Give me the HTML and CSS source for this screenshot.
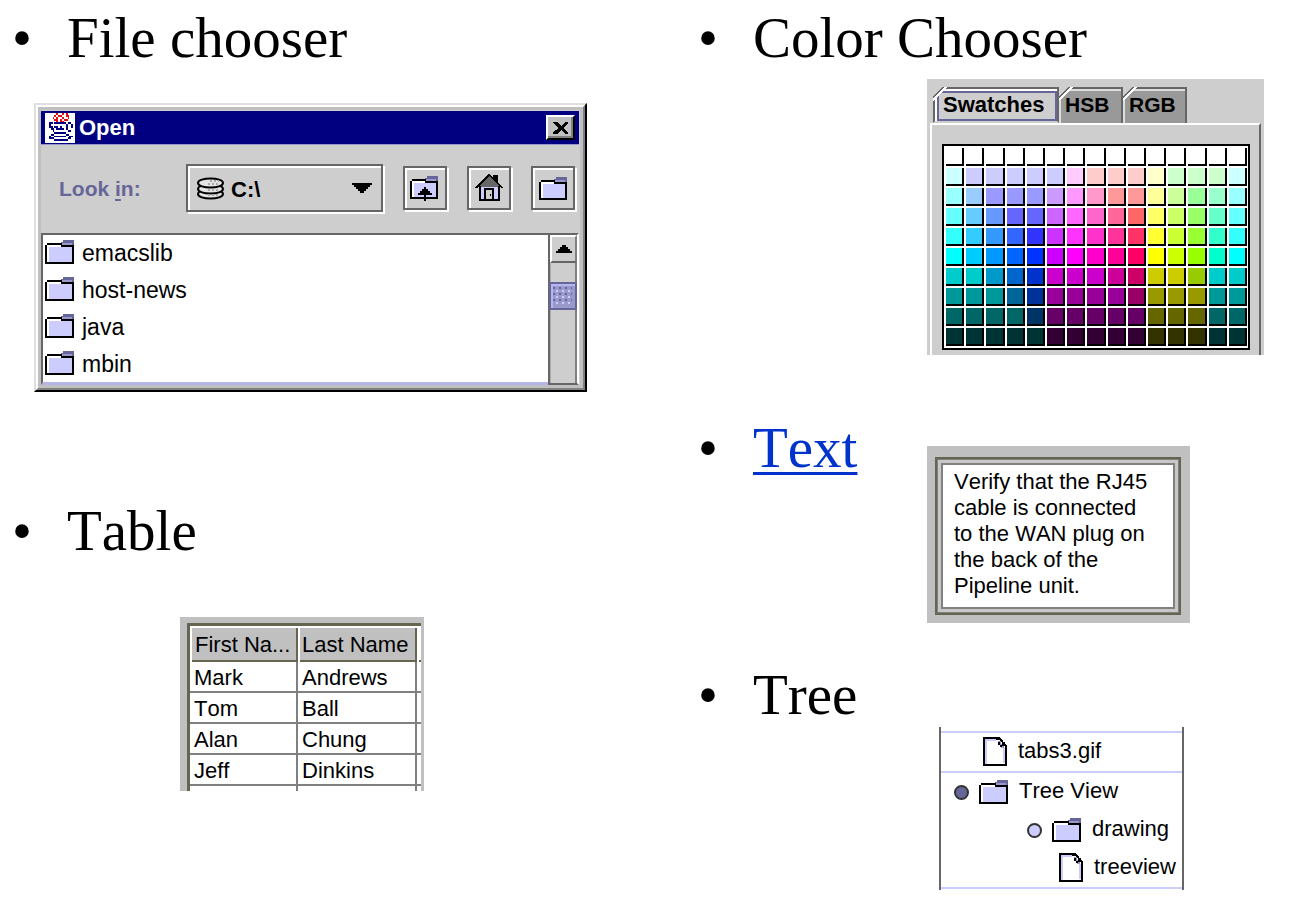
FILE: index.html
```html
<!DOCTYPE html>
<html lang="en">
<head>
<meta charset="utf-8">
<title>Swing components</title>
<link rel="stylesheet" href="styles.css">
</head>
<body>
<svg class="sprite" aria-hidden="true">
  <symbol id="folder" viewBox="0 0 30 24">
    <path fill="#ccccff" d="M2 5h26v17H2z"/>
    <path fill="#fff" d="M2 5h15v2H4v15H2z"/>
    <path fill="#666699" d="M18 0h11v5H16V2h2z"/>
    <path fill="#9999cc" d="M17 3h10v2H17z"/>
    <path d="M2 3h15v2h12v2H16V5H2zM0 5h2v17h25V7h2v17H0z"/>
  </symbol>
  <symbol id="file" viewBox="0 0 25 30">
    <path fill="#fff" stroke="#000" stroke-width="2" d="M1 1h15l7 8v19H1z"/>
    <path fill="none" stroke="#ccccff" stroke-width="2" d="M3 27V3h10M21 11v15"/>
    <path fill="#9999cc" d="M15 4h3v3h3v4h-3V8h-3z"/>
    <path d="M13 1h5v2h2v2h2v3h2v4h-2V9h-3V7h2V5h-3V3h-5zM15 5h2v3h2v2h-2V8h-2z"/>
  </symbol>
</svg>
<main class="slide">
  <div class="column">
    <section class="topic">
      <h2 class="topic-title">File chooser</h2>
      <div class="dialog">
        <div class="dialog-inner">
          <header class="titlebar">
            <svg class="java-icon" viewBox="0 0 16 16" aria-hidden="true">
              <path fill="#fff" d="M0 0h16v16H0z"/>
              <path fill="#e01010" d="M6 0h1v1H6zM9 0h1v1H9zM11 0h1v2h-1zM5 1h1v1H5zM7 1h2v1H7zM4 2h1v1H4zM6 2h1v1H6zM9 2h1v1H9zM12 1h1v2h-1zM5 3h2v1H5zM8 3h1v1H8zM10 3h2v1h-2zM6 4h1v1H6zM8 4h2v1H8z"/>
              <path fill="#000080" d="M2 5h2v1H2zM5 5h6v1H5zM2 6h1v2H2zM12 5h2v1h-2zM14 6h1v2h-1zM3 7h1v1H3zM5 7h2v1H5zM8 7h1v1H8zM11 6h1v3h-1zM3 8h2v1H3zM6 8h4v1H6zM12 9h2v1h-2zM4 9h1v1H4zM5 10h6v1H5zM3 11h2v1H3zM11 11h2v1h-2zM2 12h1v2H2zM5 12h6v1H5zM13 12h2v1h-2zM3 13h2v1H3zM12 13h2v1h-2zM5 14h7v1H5z"/>
            </svg>
            <span class="dialog-name">Open</span>
            <button class="close" aria-label="Close">
              <svg width="16" height="14" viewBox="0 0 16 14"><path d="M0 1h4l4 4 4-4h3v1l-5 5 5 4v2h-3L8 9l-4 4H0v-2l6-4-6-5z"/></svg>
            </button>
          </header>
          <div class="toolbar">
            <label class="look-label" for="drive">Look <u>i</u>n:</label>
            <span class="combo">
              <svg class="combo-disk" width="28" height="24" viewBox="0 0 28 24" aria-hidden="true">
                <g fill="#e4e4e4" stroke="#000" stroke-width="2">
                  <path d="M1 17c0-6 25-6 25 0s-25 6-25 0z"/>
                  <path d="M1 12c0-6 25-6 25 0s-25 6-25 0z"/>
                  <path d="M1 6c0-6 25-6 25 0s-25 6-25 0z"/>
                </g>
                <path stroke="#aaa" stroke-width="2" stroke-dasharray="2 2" d="M13 4h9M11 7h12M11 13h12M11 18h12"/>
              </svg>
              <select id="drive" class="combo-select"><option>C:\</option></select>
              <svg class="combo-arrow" width="20" height="10" viewBox="0 0 20 10" aria-hidden="true"><path d="M0 0h20v2h-2v2h-2v2h-2v2h-2v2H8V8H6V6H4V4H2V2H0z"/></svg>
            </span>
            <button class="tool" aria-label="Up one level">
              <svg width="30" height="28" viewBox="0 0 30 28"><use href="#folder" y="2" width="29" height="23"/><path d="M14 27v-6H8v-2h2v-2h2v-2h2v-2h2v2h2v2h2v2h2v2h-6v6z"/></svg>
            </button>
            <button class="tool" aria-label="Home">
              <svg width="28" height="30" viewBox="0 0 28 30">
                <path fill="#ccccff" d="M5 12h18v15H5z"/>
                <path fill="#666" d="M14 2l12 12H2z"/>
                <path fill="#666" d="M18 3h4v9h-4z"/>
                <path fill="#cecece" d="M11 17h7v10h-7z"/>
                <path d="M13 1h2l3 4V2h5v8l5 4v1h-2L14 3 2 15H0v-1zM4 13h2v13h17V13h2v15H4zM9 15h10v12h-2V17h-6v10H9zM15 21h1v2h-1z"/>
              </svg>
            </button>
            <button class="tool" aria-label="New folder">
              <svg width="29" height="23"><use href="#folder"/></svg>
            </button>
          </div>
          <div class="files">
            <ul class="file-list">
              <li class="file-row"><svg class="folder"><use href="#folder"/></svg>emacslib</li>
              <li class="file-row"><svg class="folder"><use href="#folder"/></svg>host-news</li>
              <li class="file-row"><svg class="folder"><use href="#folder"/></svg>java</li>
              <li class="file-row"><svg class="folder"><use href="#folder"/></svg>mbin</li>
            </ul>
            <div class="scrollbar">
              <button class="scroll-up" aria-label="Scroll up"><svg width="16" height="8" viewBox="0 0 16 8"><path d="M6 0h4v2h2v2h2v2h2v2H0V6h2V4h2V2h2z"/></svg></button>
              <div class="thumb"></div>
            </div>
          </div>
        </div>
      </div>
    </section>
    <section class="topic topic-table">
      <h2 class="topic-title">Table</h2>
      <div class="table-frame">
        <table class="names">
          <thead><tr><th>First Na...</th><th>Last Name</th><th></th></tr></thead>
          <tbody>
            <tr><td>Mark</td><td>Andrews</td><td></td></tr>
            <tr><td>Tom</td><td>Ball</td><td></td></tr>
            <tr><td>Alan</td><td>Chung</td><td></td></tr>
            <tr><td>Jeff</td><td>Dinkins</td><td></td></tr>
            <tr class="cut-row"><td></td><td></td><td></td></tr>
          </tbody>
        </table>
      </div>
    </section>
  </div>
  <div class="column">
    <section class="topic">
      <h2 class="topic-title">Color Chooser</h2>
      <div class="chooser">
        <div class="tabs">
          <button class="tab tab-active">Swatches</button>
          <button class="tab">HSB</button>
          <button class="tab">RGB</button>
        </div>
        <div class="tab-panel"><div class="swatches" id="swatches"></div></div>
      </div>
    </section>
    <section class="topic topic-text">
      <h2 class="topic-title"><a class="topic-link" href="#note">Text</a></h2>
      <div class="note-frame">
        <textarea id="note" class="note" rows="5" aria-label="Text" readonly>Verify that the RJ45
cable is connected
to the WAN plug on
the back of the
Pipeline unit.</textarea>
      </div>
    </section>
    <section class="topic topic-tree">
      <h2 class="topic-title">Tree</h2>
      <div class="tree">
        <ul class="branch">
          <li class="node node-file"><svg class="file"><use href="#file"/></svg><span class="node-label">tabs3.gif</span></li>
        </ul>
        <ul class="branch">
          <li class="node"><span class="handle handle-open"></span><svg class="folder"><use href="#folder"/></svg><span class="node-label">Tree View</span></li>
          <li class="node node-child"><span class="handle"></span><svg class="folder"><use href="#folder"/></svg><span class="node-label">drawing</span></li>
          <li class="node node-leaf"><svg class="file"><use href="#file"/></svg><span class="node-label">treeview</span></li>
        </ul>
      </div>
    </section>
  </div>
</main>
<script src="swatches.js"></script>
</body>
</html>
```
FILE: styles.css
```css
* { box-sizing: border-box; }

body {
  margin: 0;
  background: #fff;
  color: #000;
  font-family: "Liberation Sans", Arial, sans-serif;
  font-size: 22px;
  font-kerning: none;
}

ul { margin: 0; padding: 0; list-style: none; }
button { padding: 0; font: inherit; color: inherit; }
svg { display: block; flex: none; shape-rendering: crispEdges; }
.sprite { position: absolute; width: 0; height: 0; }

.slide {
  display: grid;
  grid-template-columns: 686fr 604fr;
  align-items: start;
  padding-top: 6px;
}

.topic-title {
  display: flex;
  margin: 0;
  padding-left: 12px;
  font: 57px/64px "Liberation Serif", "Times New Roman", serif;
  font-kerning: none;
}
.topic-title::before { content: "•"; width: 55px; }
.topic-link {
  color: #0033cc;
  text-decoration-thickness: 3px;
  text-underline-offset: 5px;
}

/* File dialog */
.dialog {
  width: 553px;
  margin: 33px 0 0 34px;
  border: 2px solid;
  border-color: #dfdfdf #000 #000 #dfdfdf;
}
.dialog-inner {
  padding: 4px 4px 3px 3px;
  border: 2px solid;
  border-color: #fff #808080 #808080 #fff;
  background: #cecece;
  box-shadow: inset 0 0 0 3px #c0c0c0;
}
.titlebar {
  display: flex;
  align-items: center;
  height: 34px;
  padding: 0 4px;
  background: #000080;
  border-bottom: 1px solid #9999cc;
  color: #fff;
  font-weight: bold;
}
.java-icon { width: 30px; height: 30px; }
.dialog-name { flex: 1; padding-left: 4px; }
.close {
  display: grid;
  place-items: center;
  width: 29px;
  height: 25px;
  background: #c0c0c0;
  border: 2px solid;
  border-color: #fff #000 #000 #fff;
  box-shadow: inset -2px -2px #808080;
  color: #000;
}
.toolbar {
  display: flex;
  align-items: center;
  gap: 20px;
  height: 88px;
  padding: 0 4px 2px 18px;
}
.look-label {
  width: 107px;
  padding-top: 2px;
  color: #666699;
  font-size: 21px;
  font-weight: bold;
}
.look-label u { text-decoration-thickness: 2px; text-underline-offset: 3px; }
.combo, .tool {
  border: 2px solid #666;
  box-shadow: inset 2px 2px #fff, 2px 2px #fff;
  background: #cecece;
}
.combo { position: relative; flex: 1; height: 48px; }
.combo-select {
  width: 100%;
  height: 100%;
  padding: 2px 40px 0 43px;
  border: 0;
  background: transparent;
  appearance: none;
  color: #000;
  font: bold 22px "Liberation Sans", Arial, sans-serif;
}
.combo-disk { position: absolute; left: 9px; top: 11px; shape-rendering: auto; }
.combo-arrow { position: absolute; right: 9px; top: 17px; }
.tool { display: grid; place-items: center; width: 44px; height: 44px; }

.files { display: flex; background: #fff; }
.file-list {
  flex: 1;
  display: grid;
  gap: 1px;
  border: solid #666;
  border-width: 2px 0 0 2px;
  border-bottom: 3px solid #b5b5e6;
  font-size: 23px;
}
.file-row { display: flex; align-items: center; gap: 7px; height: 36px; padding-left: 2px; }
.folder { width: 30px; height: 24px; }
.file { width: 25px; height: 30px; }
.file-row .folder { margin-bottom: 2px; }
.scrollbar {
  width: 31px;
  border: 2px solid #666;
  border-right-color: #fff;
  background: #cecece;
  box-shadow: inset -2px 0 #808080, inset 1px 0 #aaa;
}
.scroll-up {
  display: grid;
  place-items: center;
  width: 27px;
  height: 28px;
  border: 2px solid;
  border-color: #fff #808080 #666 #fff;
  background: #cecece;
}
.thumb {
  height: 28px;
  margin: 19px 0 0 -1px;
  border: 2px solid #666699;
  background:
    radial-gradient(circle at 2px 2px, #ccccff 1px, transparent 1px) 4px 5px / 6px 6px,
    radial-gradient(circle at 5px 5px, #666699 1px, transparent 1px) 4px 5px / 6px 6px,
    #9999cc;
  box-shadow: inset 2px 2px #b5b5f0, inset -3px -4px #9999cc;
}

/* Table */
.topic-table { margin-top: 107px; }
.table-frame {
  width: 244px;
  margin: 54px 0 0 180px;
  padding: 6px 3px 0 7px;
  background: #c0c0c0;
}
.names {
  width: 100%;
  table-layout: fixed;
  border-collapse: separate;
  border-spacing: 0;
  border: solid #666650;
  border-width: 3px 0 0 3px;
  background: #fff;
}
.names th {
  height: 36px;
  padding: 0 0 0 2px;
  border: solid #fff;
  border-width: 2px 0 0 2px;
  background: #c0c0c0;
  box-shadow: inset -2px -2px #666650;
  font-weight: normal;
  text-align: left;
  white-space: nowrap;
}
.names th:nth-child(1) { width: 108px; padding-left: 3px; }
.names th:nth-child(2) { width: 119px; }
.names th:nth-child(3) { background: #fff; box-shadow: inset 0 -2px #666650; }
.names td {
  height: 31px;
  padding: 2px 0 0 4px;
  border: solid #808080;
  border-width: 0 2px 2px 0;
  line-height: 27px;
}
.names td:last-child { border-right: 0; }
.names .cut-row td { height: 5px; padding: 0; border-bottom: 0; line-height: 0; }

/* Color chooser */
.chooser {
  width: 337px;
  margin: 9px 0 0 241px;
  padding: 8px 3px 0;
  background: #cecece;
}
.tabs { display: flex; padding-left: 3px; font-weight: bold; }
.tab {
  position: relative;
  width: 64px;
  height: 36px;
  padding-left: 6px;
  border: 0;
  background: #999;
  box-shadow: inset -2px 2px #666, inset 0 4px #ddd, inset 2px 0 #ddd;
  font-size: 21px;
  text-align: left;
}
.tab::before {
  content: "";
  position: absolute;
  top: 0;
  left: 0;
  width: 14px;
  height: 14px;
  background: linear-gradient(135deg, #cecece 7px, #666 7px, #666 8px, #fff 8px, #fff 10px, transparent 10px);
}
.tab-active {
  width: 126px;
  padding-left: 8px;
  border: 2px solid #666;
  border-bottom-color: #cecece;
  background: #cecece;
  box-shadow: inset 2px 2px #fff, inset 4px 4px #666699, inset -2px -2px #666699;
  font-size: 22px;
}
.tab-active::before { top: -2px; left: -2px; }
.tab-panel {
  padding: 19px 9px 5px 10px;
  border: 2px solid #fff;
  border-right-color: #666;
  border-bottom: 0;
}
.swatches {
  display: grid;
  grid-template-columns: repeat(15, 1fr);
  grid-auto-rows: 18px;
  gap: 2px;
  padding: 2px 1px 2px 2px;
  border: 2px solid #000;
  background: #fff;
}
.swatch { border: 0; border-right: 2px solid #000; border-bottom: 2px solid #000; }

/* Text area */
.topic-text {
  display: grid;
  grid-template-columns: 241px 263px;
  align-items: start;
  margin-top: 61px;
}
.note-frame {
  margin-top: 30px;
  padding: 11px 9px 8px 8px;
  background: #c0c0c0;
}
.note {
  display: block;
  width: 100%;
  height: 158px;
  padding: 10px 8px 0 17px;
  border: 2px solid #666650;
  outline: 0;
  background: #fff;
  box-shadow: inset 0 0 0 1px #808080, inset 0 0 0 4px #c8c8c8, inset 0 0 0 6px #808080;
  color: #000;
  font: 22px/26px "Liberation Sans", Arial, sans-serif;
  font-kerning: none;
  resize: none;
  overflow: hidden;
}

/* Tree */
.topic-tree { margin-top: 40px; }
.tree {
  width: 245px;
  margin-left: 253px;
  padding: 4px 0 1px;
  border: solid #666;
  border-width: 0 2px;
}
.branch { border-top: 2px solid #ccccff; }
.branch:last-child { border-bottom: 2px solid #ccccff; }
.node { display: flex; align-items: center; gap: 10px; height: 38px; padding-left: 13px; white-space: nowrap; }
.node-file { padding-left: 42px; }
.node-child { padding-left: 86px; }
.node-leaf { padding-left: 118px; }
.node-label { padding-bottom: 3px; }
.handle {
  width: 15px;
  height: 15px;
  border: 2px solid #333;
  border-radius: 50%;
  background: #ccccff;
}
.handle-open { background: #666699; }
```
FILE: swatches.js
```js
const palette = [
  "fff fff fff fff fff fff fff fff fff fff fff fff fff fff fff",
  "cff ccf ccf ccf ccf ccf fcf fcc fcc fcc ffc cfc cfc cfc cff",
  "9ff 9cf 99f 99f 99f c9f f9f f9c f99 f99 ff9 cf9 9f9 9fc 9ff",
  "6ff 6cf 69f 66f 66f c6f f6f f6c f69 f66 ff6 cf6 9f6 6fc 6ff",
  "3ff 3cf 39f 36f 33f c3f f3f f3c f39 f36 ff3 cf3 9f3 3fc 3ff",
  "0ff 0cf 09f 06f 03f c0f f0f f0c f09 f06 ff0 cf0 9f0 0fc 0ff",
  "0cc 0cc 09c 06c 03c c0c c0c c0c c09 c06 cc0 cc0 9c0 0cc 0cc",
  "099 099 099 069 039 909 909 909 909 906 990 990 990 099 099",
  "066 066 066 066 036 606 606 606 606 606 660 660 660 066 066",
  "033 033 033 033 033 303 303 303 303 303 330 330 330 033 033"
];

const grid = document.getElementById("swatches");
for (const row of palette) {
  for (const color of row.split(" ")) {
    const swatch = document.createElement("button");
    swatch.className = "swatch";
    swatch.style.backgroundColor = "#" + color;
    swatch.setAttribute("aria-label", "#" + color);
    grid.append(swatch);
  }
}
```
